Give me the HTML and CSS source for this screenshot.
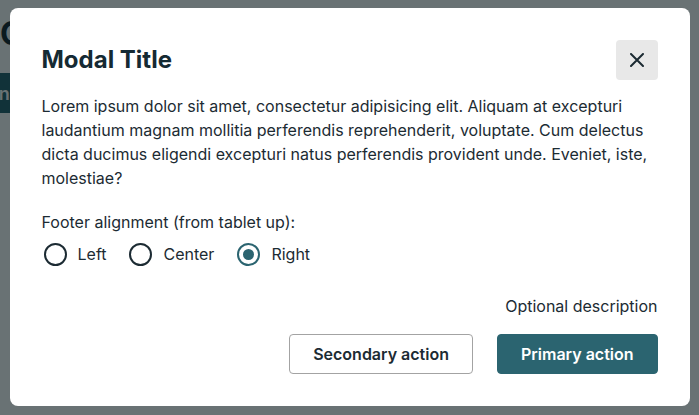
FILE: index.html
```html
<!DOCTYPE html>
<html lang="en">
<head>
<meta charset="utf-8">
<title>Modal</title>
<link rel="stylesheet" href="styles.css">
</head>
<body>
<div class="page">
  <h1 class="page-title">C</h1>
  <button class="page-btn">Open</button>
</div>
<div class="overlay">
  <div class="modal" role="dialog" aria-labelledby="mt">
    <div class="modal-header">
      <h2 id="mt" class="modal-title">Modal Title</h2>
      <button class="close" aria-label="Close">
        <svg width="14" height="14" viewBox="0 0 14 14"><path d="M1 1L13 13M13 1L1 13" stroke="#1c2b33" stroke-width="2" stroke-linecap="round"/></svg>
      </button>
    </div>
    <p class="modal-text">Lorem ipsum dolor sit amet, consectetur adipisicing elit. Aliquam at excepturi laudantium magnam mollitia perferendis reprehenderit, voluptate. Cum delectus dicta ducimus eligendi excepturi natus perferendis provident unde. Eveniet, iste, molestiae?</p>
    <div class="field-label">Footer alignment (from tablet up):</div>
    <div class="radios">
      <label class="radio"><span class="dot"></span><span>Left</span></label>
      <label class="radio"><span class="dot"></span><span>Center</span></label>
      <label class="radio checked"><span class="dot"></span><span>Right</span></label>
    </div>
    <div class="footer">
      <div class="desc">Optional description</div>
      <div class="actions">
        <button class="btn btn-secondary">Secondary action</button>
        <button class="btn btn-primary">Primary action</button>
      </div>
    </div>
  </div>
</div>
</body>
</html>
```
FILE: styles.css
```css
* { box-sizing: border-box; }
html, body { margin: 0; padding: 0; }
body {
  font-family: Inter, "Noto Sans", sans-serif;
  color: #1c2b33;
  background: #fff;
  width: 699px;
  height: 415px;
  overflow: hidden;
}
.page {
  padding-top: 14px;
  display: flex;
  flex-direction: column;
  align-items: flex-start;
}
.page-title {
  margin: 0 0 19px 0;
  font-size: 32px;
  line-height: 40px;
  font-weight: 700;
  color: #1c2b33;
  white-space: nowrap;
}
.page-btn {
  display: block;
  height: 40px;
  margin-left: -37px;
  border: 0;
  border-radius: 4px;
  background: #2b6470;
  color: #fff;
  font-family: Inter, sans-serif;
  font-size: 18px;
  font-weight: 600;
  padding: 0 24px 0 0;
}
.overlay {
  position: fixed;
  inset: 0;
  background: rgba(0, 16, 18, 0.59);
  display: flex;
  align-items: center;
  justify-content: center;
  padding-bottom: 1px;
}
.modal {
  width: 680px;
  background: #fff;
  border-radius: 8px;
  padding: 32px;
  display: flex;
  flex-direction: column;
}
.modal-header {
  display: flex;
  align-items: center;
  justify-content: space-between;
  height: 40px;
}
.modal-title {
  margin: 0;
  font-size: 24px;
  line-height: 30px;
  font-weight: 700;
  color: #152a33;
}
.close {
  width: 42px;
  height: 40px;
  border: 0;
  border-radius: 4px;
  background: #e8e8e8;
  display: flex;
  align-items: center;
  justify-content: center;
  padding: 0;
}
.modal-text {
  margin: 14px 0 0 0;
  font-size: 16px;
  line-height: 24px;
}
.field-label {
  margin-top: 20px;
  font-size: 16px;
  line-height: 24px;
}
.radios {
  margin-top: 8px;
  display: flex;
  gap: 23px;
  height: 24px;
  align-items: center;
  padding-left: 2px;
}
.radio {
  display: flex;
  align-items: center;
  gap: 11px;
  font-size: 16px;
  line-height: 24px;
}
.dot {
  width: 23px;
  height: 23px;
  border: 2px solid #1c2b33;
  border-radius: 50%;
  display: flex;
  align-items: center;
  justify-content: center;
}
.checked .dot { border-color: #2b6470; }
.checked .dot::after {
  content: "";
  width: 11px;
  height: 11px;
  border-radius: 50%;
  background: #2b6470;
}
.footer {
  margin-top: 28px;
  display: flex;
  flex-direction: column;
  align-items: flex-end;
}
.desc {
  font-size: 16px;
  line-height: 24px;
}
.actions {
  margin-top: 16px;
  display: flex;
  gap: 24px;
}
.btn {
  height: 40px;
  padding: 0 23px;
  border-radius: 4px;
  font-family: Inter, sans-serif;
  font-size: 16px;
  font-weight: 600;
  line-height: 24px;
}
.btn-secondary {
  background: #fff;
  border: 1px solid #a3a3a3;
  color: #1c2b33;
}
.btn-primary {
  background: #2b6470;
  border: 1px solid #2b6470;
  color: #fff;
}
```
